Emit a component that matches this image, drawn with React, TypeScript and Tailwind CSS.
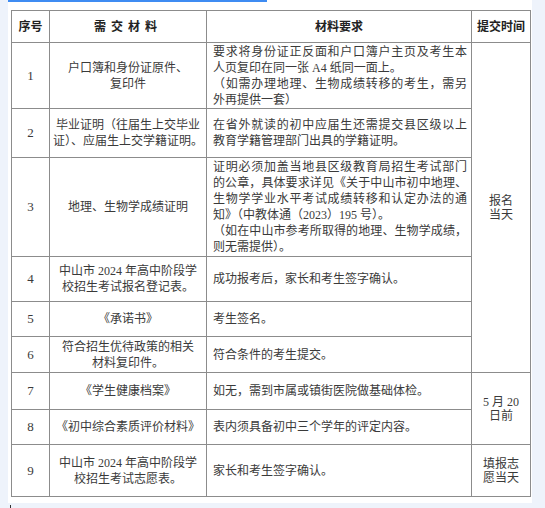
import React from 'react';

const font = { fontFamily: '"Liberation Serif", "Noto Sans CJK SC", serif' };

type Line = { t: string; j?: boolean };

const rows: { no: string; mat: string[]; req: Line[]; h: number }[] = [
  {
    no: '1',
    mat: ['户口簿和身份证原件、', '复印件'],
    req: [
      { t: '要求将身份证正反面和户口簿户主页及考生本', j: true },
      { t: '人页复印在同一张 A4 纸同一面上。' },
      { t: '（如需办理地理、生物成绩转移的考生，需另', j: true },
      { t: '外再提供一套）' },
    ],
    h: 66,
  },
  {
    no: '2',
    mat: ['毕业证明（往届生上交毕业', '证）、应届生上交学籍证明。'],
    req: [
      { t: '在省外就读的初中应届生还需提交县区级以上', j: true },
      { t: '教育学籍管理部门出具的学籍证明。' },
    ],
    h: 49,
  },
  {
    no: '3',
    mat: ['地理、生物学成绩证明'],
    req: [
      { t: '证明必须加盖当地县区级教育局招生考试部门', j: true },
      { t: '的公章，具体要求详见《关于中山市初中地理、', j: true },
      { t: '生物学学业水平考试成绩转移和认定办法的通', j: true },
      { t: '知》（中教体通（2023）195 号）。' },
      { t: '（如在中山市参考所取得的地理、生物学成绩，', j: true },
      { t: '则无需提供）。' },
    ],
    h: 99,
  },
  {
    no: '4',
    mat: ['中山市 2024 年高中阶段学', '校招生考试报名登记表。'],
    req: [{ t: '成功报考后，家长和考生签字确认。' }],
    h: 45,
  },
  { no: '5', mat: ['《承诺书》'], req: [{ t: '考生签名。' }], h: 35 },
  {
    no: '6',
    mat: ['符合招生优待政策的相关', '材料复印件。'],
    req: [{ t: '符合条件的考生提交。' }],
    h: 36,
  },
  { no: '7', mat: ['《学生健康档案》'], req: [{ t: '如无，需到市属或镇街医院做基础体检。' }], h: 37 },
  { no: '8', mat: ['《初中综合素质评价材料》'], req: [{ t: '表内须具备初中三个学年的评定内容。' }], h: 35 },
  {
    no: '9',
    mat: ['中山市 2024 年高中阶段学', '校招生考试志愿表。'],
    req: [{ t: '家长和考生签字确认。' }],
    h: 52,
  },
];

const timing: Record<number, { lines: string[]; span: number }> = {
  0: { lines: ['报名', '当天'], span: 6 },
  6: { lines: ['5 月 20', '日前'], span: 2 },
  8: { lines: ['填报志', '愿当天'], span: 1 },
};

const cell = 'border border-[#8c8c8c] align-middle';

export default function App() {
  return (
    <div className="w-[545px] h-[508px] bg-[#eef3fb] pl-[8px] overflow-hidden" style={font}>
      <div className="w-[524px] h-[503px] bg-white">
        <div className="h-[2px] w-[259px] bg-[#3f8cf2]" />
        <div className="pl-[3px] pt-[8px]">
          <table className="w-[519px] table-fixed border-collapse text-[12px] leading-[16px] text-[#3a3a3a]">
            <colgroup>
              <col className="w-[38px]" />
              <col className="w-[157px]" />
              <col className="w-[265px]" />
              <col className="w-[59px]" />
            </colgroup>
            <thead>
              <tr className="h-[32px]">
                <th className={`${cell} font-bold text-[#222]`}>序号</th>
                <th className={`${cell} font-bold text-[#222] tracking-[5px]`}>需交材料</th>
                <th className={`${cell} font-bold text-[#222]`}>材料要求</th>
                <th className={`${cell} font-bold text-[#222]`}>提交时间</th>
              </tr>
            </thead>
            <tbody>
              {rows.map((r, i) => (
                <tr key={r.no} style={{ height: r.h }}>
                  <td className={`${cell} text-center text-[13px]`}>{r.no}</td>
                  <td className={`${cell} text-center whitespace-nowrap`}>
                    {r.mat.map((m) => (
                      <span key={m} className="block">{m}</span>
                    ))}
                  </td>
                  <td className={`${cell} pl-[6px] pr-[4px] whitespace-nowrap`}>
                    {r.req.map((l) => (
                      <span
                        key={l.t}
                        className={l.j ? 'block text-justify [text-align-last:justify]' : 'block text-left'}
                      >
                        {l.t}
                      </span>
                    ))}
                  </td>
                  {timing[i] && (
                    <td rowSpan={timing[i].span} className={`${cell} text-center leading-[14px]`}>
                      {timing[i].lines.map((t) => (
                        <span key={t} className="block">{t}</span>
                      ))}
                    </td>
                  )}
                </tr>
              ))}
            </tbody>
          </table>
        </div>
      </div>
      <div className="ml-[2px] mt-[2px] w-[1px] h-[3px] bg-[#333]" />
    </div>
  );
}
